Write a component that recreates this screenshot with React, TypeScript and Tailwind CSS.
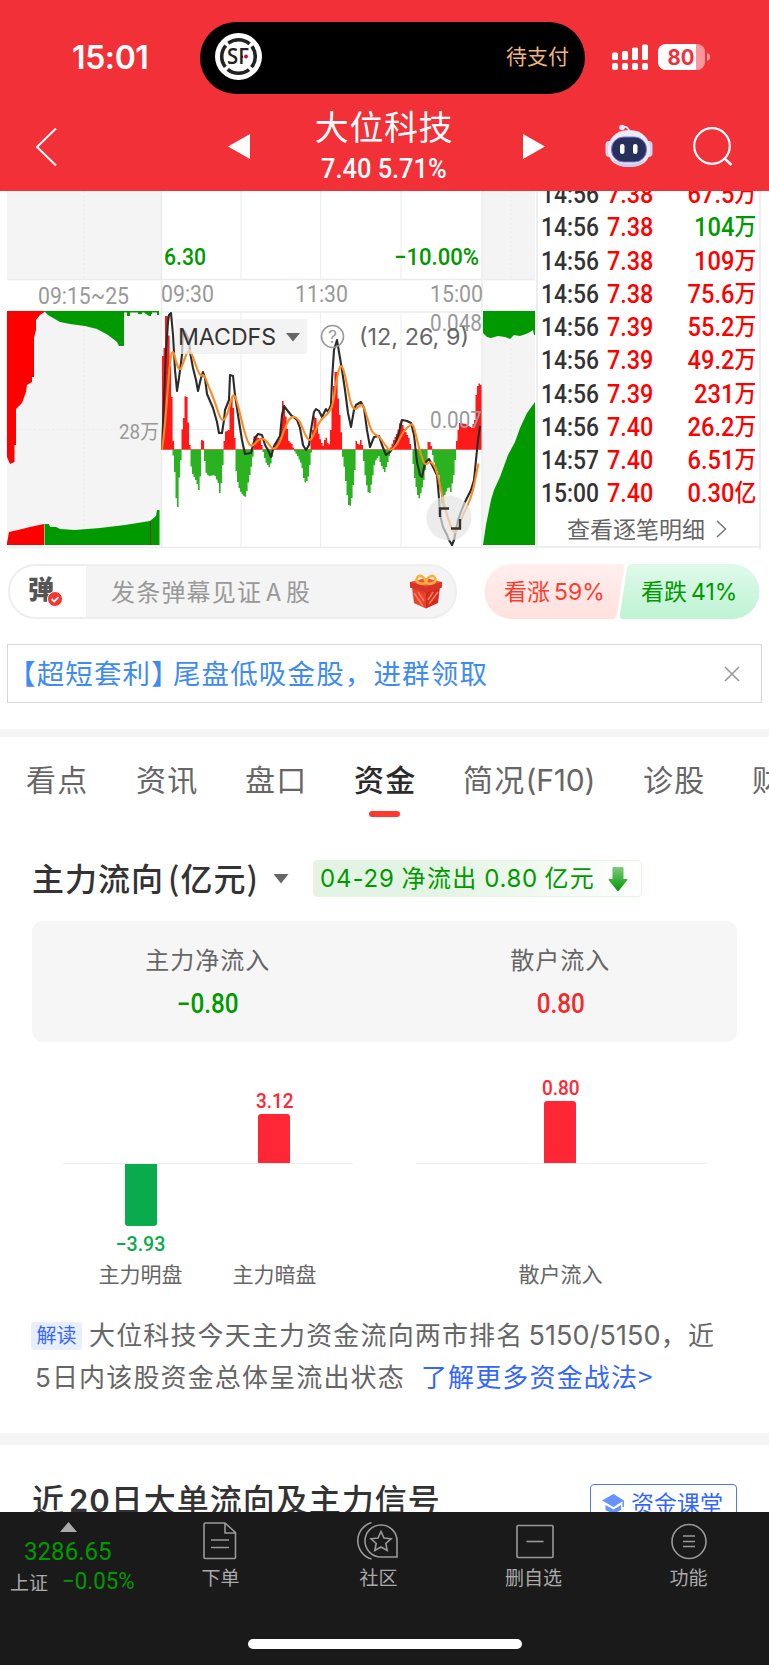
import type { ReactNode } from 'react';

type Point = [number, number];

interface Trade {
  time: string;
  price: string;
  amount: string;
  down?: boolean;
}

const trades: Trade[] = [
  { time: '14:56', price: '7.38', amount: '67.5万' },
  { time: '14:56', price: '7.38', amount: '104万', down: true },
  { time: '14:56', price: '7.38', amount: '109万' },
  { time: '14:56', price: '7.38', amount: '75.6万' },
  { time: '14:56', price: '7.39', amount: '55.2万' },
  { time: '14:56', price: '7.39', amount: '49.2万' },
  { time: '14:56', price: '7.39', amount: '231万' },
  { time: '14:56', price: '7.40', amount: '26.2万' },
  { time: '14:57', price: '7.40', amount: '6.51万' },
  { time: '15:00', price: '7.40', amount: '0.30亿' },
];

const ZERO = 449.5;

// MACD histogram outline, above the zero line
const redProfile: Point[] = [
  [162, 356], [164, 345], [165, 316], [167, 316], [169, 355], [171, 397], [172, 432], [173, 450],
  [180, 450], [181, 433], [183, 418], [184, 396], [186, 397], [187, 421], [188, 424], [189, 445], [190, 450],
  [200, 450], [201, 440], [203, 441], [204, 450],
  [223, 450], [224, 432], [228, 430], [229, 415], [230, 396], [232, 400], [233, 416], [234, 438], [235, 450],
  [252, 450], [253, 436], [258, 438], [260, 440], [262, 450],
  [272, 450], [274, 444], [280, 438], [281, 414], [282, 401], [284, 408], [286, 425], [288, 441], [292, 445], [293, 450],
  [309, 450], [312, 430], [314, 412], [315, 418], [317, 430], [320, 441], [323, 447], [324, 440], [326, 437],
  [328, 449], [330, 430], [332, 400], [334, 372], [336, 372], [337, 393], [339, 415], [341, 438], [342, 450],
  [354, 450], [355, 440], [358, 446], [360, 440], [363, 450],
  [389, 450], [393, 440], [397, 432], [400, 419], [403, 428], [408, 438], [411, 450],
  [426, 450], [427, 442], [430, 442], [431, 450],
  [455, 450], [457, 432], [459, 423], [465, 424], [471, 428], [474, 420], [475, 398], [477, 386], [478, 383], [481, 386],
];

// MACD histogram outline, below the zero line
const greenProfile: Point[] = [
  [172, 450], [174, 472], [176, 507], [177, 507], [178, 485], [179, 470], [181, 450],
  [189, 450], [191, 472], [193, 476], [196, 482], [198, 490], [200, 472], [201, 450],
  [203, 450], [205, 472], [208, 476], [214, 475], [218, 484], [219, 493], [221, 480], [223, 450],
  [234, 450], [236, 478], [239, 490], [242, 495], [245, 497], [247, 485], [250, 470], [253, 450],
  [262, 450], [265, 462], [269, 468], [273, 450],
  [293, 450], [297, 456], [301, 465], [303, 478], [305, 484], [308, 475], [310, 455], [311, 450],
  [341, 450], [344, 470], [346, 492], [348, 505], [350, 506], [352, 490], [354, 470], [355, 450],
  [362, 450], [364, 472], [367, 492], [369, 493], [371, 482], [374, 462], [378, 456], [380, 464], [384, 472], [387, 462], [390, 450],
  [411, 450], [414, 478], [416, 490], [418, 500], [421, 490], [423, 480], [426, 460], [427, 450],
  [431, 450], [434, 465], [438, 475], [440, 495], [442, 512], [444, 495], [448, 486], [450, 492], [453, 475], [455, 455], [456, 450],
];

const fastLine =
  '162,450 164,400 166,350 168,322 169,315 171,313 173,335 175,370 177,391 179,378 182,355 183,330 185,332 189,340 190,352 193,368 196,380 198,391 201,378 203,372 205,378 207,394 213,408 217,422 219,433 222,433 224,420 225,410 229,400 230,375 233,376 235,395 238,415 242,440 245,454 251,453 255,438 258,434 262,435 265,445 268,450 271,457 274,446 280,436 282,415 284,406 287,410 291,415 297,420 300,428 303,445 306,450 309,445 311,430 314,412 316,409 319,411 322,417 326,409 328,412 331,405 332,380 334,350 337,340 339,352 342,370 345,390 348,413 351,427 354,410 356,405 361,402 364,408 367,430 370,447 374,437 379,436 382,445 386,455 390,452 395,445 399,432 402,420 407,421 411,423 414,435 417,462 420,475 422,477 425,463 429,459 432,465 437,475 439,498 440,515 443,527 447,535 449,540 452,545 454,540 456,530 458,520 462,509 465,502 468,496 471,490 474,480 476,460 478,440 480,426';

const slowLine: Point[] = [
  [162, 450], [164, 435], [167, 400], [170, 360], [173, 349], [176, 362], [180, 372], [184, 360], [189, 348], [193, 357],
  [200, 377], [204, 374], [208, 385], [215, 402], [219, 415], [223, 422], [228, 413], [231, 400], [234, 393], [238, 405],
  [243, 427], [248, 443], [252, 447], [258, 440], [263, 438], [268, 443], [273, 450], [279, 445], [284, 430], [289, 419],
  [294, 416], [300, 421], [305, 435], [310, 442], [315, 432], [320, 420], [328, 414], [333, 405], [336, 383], [340, 364],
  [344, 370], [348, 390], [351, 405], [355, 410], [359, 406], [363, 404], [368, 420], [372, 433], [379, 436], [385, 445],
  [390, 451], [396, 446], [403, 432], [409, 426], [413, 423], [417, 440], [421, 455], [425, 466], [430, 461], [435, 466],
  [439, 480], [443, 500], [449, 522], [455, 536], [460, 521], [468, 505], [473, 491], [477, 470], [480, 457],
];

function toColumns(profile: Point[]): string {
  let d = '';
  for (let x = 162; x < 481; x += 1.5) {
    const i = profile.findIndex((p) => p[0] > x);
    if (i < 1) continue;
    const [x0, y0] = profile[i - 1];
    const [x1, y1] = profile[i];
    const y = y0 + ((y1 - y0) * (x - x0)) / (x1 - x0);
    if (Math.abs(y - ZERO) < 1) continue;
    d += `M${x} ${ZERO}V${y.toFixed(1)}h1.6V${ZERO}z`;
  }
  return d;
}

function smooth(points: Point[]): string {
  let d = `M${points[0][0]} ${points[0][1]}`;
  for (let i = 1; i < points.length - 1; i++) {
    const mx = (points[i][0] + points[i + 1][0]) / 2;
    const my = (points[i][1] + points[i + 1][1]) / 2;
    d += `Q${points[i][0]} ${points[i][1]} ${mx} ${my}`;
  }
  return d;
}

function StatusBar() {
  return (
    <div className="flex h-[108px] items-start pt-[22px]">
      <div className="w-[200px] pl-[72px] pt-[18px] font-[Inter] text-[32px] font-semibold leading-[36px] tracking-[-0.4px]">15:01</div>
      <div className="flex h-[72px] w-[385px] items-center justify-between rounded-full bg-black pl-[15px] pr-[16px]">
        <svg width="47" height="47" viewBox="0 0 47 47" className="-mt-1">
          <circle cx="23.5" cy="23.5" r="23.5" fill="#fff" />
          <circle cx="23.5" cy="23.5" r="16.8" fill="none" stroke="#222" strokeWidth="3.6" strokeDasharray="23 3.39" strokeDashoffset="-14.9" />
          <text x="12" y="31" fontFamily="Open Sans" fontWeight="600" fontSize="21" textLength="22" lengthAdjust="spacingAndGlyphs" fill="#222">SF</text>
          <circle cx="31" cy="23.5" r="3" fill="#fff" />
          <circle cx="31" cy="23.5" r="1.9" fill="#e60028" />
        </svg>
        <span className="-mt-1 text-[21px] text-[#efb47c]">待支付</span>
      </div>
      <svg width="100" height="28" viewBox="0 0 100 28" className="ml-[26px] mt-[21px]">
        <g fill="#fff">
          <rect x="1" y="9.500" width="6" height="7.500" rx="1.500" />
          <rect x="11" y="8" width="6" height="9" rx="1.500" />
          <rect x="21" y="4.500" width="6" height="12.500" rx="1.500" />
          <rect x="31" y="1.500" width="6" height="15.500" rx="1.500" />
          {[1, 11, 21, 31].map((x) => (
            <rect key={x} x={x} y="20" width="6" height="7" rx="2" />
          ))}
        </g>
        <clipPath id="battery"><rect x="47" y="1" width="47" height="26" rx="8" /></clipPath>
        <g clipPath="url(#battery)">
          <rect x="47" y="1" width="47" height="26" fill="#f9979b" />
          <rect x="47" y="1" width="38" height="26" fill="#fff" />
        </g>
        <path d="M96 10q3 1 3 4t-3 4z" fill="#f9979b" />
        <text x="56.500" y="21.500" fontFamily="Inter" fontWeight="700" fontSize="21" textLength="27" lengthAdjust="spacingAndGlyphs" fill="#f23038">80</text>
      </svg>
    </div>
  );
}

function Robot() {
  return (
    <svg width="48" height="44" viewBox="0 0 48 44">
      <path d="M17 3q7-1 7 5" fill="none" stroke="#dfe0f4" strokeWidth="2" />
      <circle cx="17" cy="3.500" r="2.800" fill="#e6e6f6" />
      <rect x="0.500" y="17" width="8" height="16" rx="4" fill="#d3d4f0" />
      <rect x="39.500" y="17" width="8" height="16" rx="4" fill="#d3d4f0" />
      <path d="M24 6C38 6 45 15 45 26S37 43 24 43 3 37 3 26 10 6 24 6z" fill="#ececf8" />
      <path d="M7 35q6 8 17 8t17-8q-7 5-17 5T7 35z" fill="#cacdec" />
      <rect x="6.500" y="13" width="35" height="25" rx="12" fill="#27305a" stroke="#7d74e8" />
      <rect x="15" y="20" width="4.500" height="10" rx="2.200" fill="#fff" />
      <rect x="28" y="20" width="4.500" height="10" rx="2.200" fill="#fff" />
    </svg>
  );
}

function NavBar() {
  return (
    <div className="flex h-[83px] items-start">
      <svg width="30" height="42" viewBox="0 0 30 42" className="ml-[32px] mt-[18px]">
        <path d="M24 2.500 5 21l19 18.500" fill="none" stroke="#fff" strokeWidth="2" />
      </svg>
      <svg width="22" height="26" viewBox="0 0 22 26" className="ml-[166px] mt-[25px]">
        <path d="M22 1v25L0 13.500z" fill="#fff" />
      </svg>
      <div className="flex w-[273px] flex-col items-center pr-[5px]">
        <div className="-mt-px text-[34px] leading-[38px] tracking-[0.600px]">大位科技</div>
        <div className="mt-[9px] scale-x-[0.94] whitespace-nowrap font-[Roboto] text-[27px] font-medium leading-[31px]">7.40 5.71%</div>
      </div>
      <svg width="22" height="26" viewBox="0 0 22 26" className="mt-[25px]">
        <path d="M0 1v25l22-12.500z" fill="#fff" />
      </svg>
      <div className="ml-[60px] mt-[16px]"><Robot /></div>
      <svg width="42" height="42" viewBox="0 0 42 42" className="ml-[39px] mt-[18px]">
        <circle cx="20" cy="20" r="17.800" fill="none" stroke="#fff" strokeWidth="2.200" />
        <path d="m32 32 7.500 7" stroke="#fff" strokeWidth="2.400" />
      </svg>
    </div>
  );
}

interface ChartTextProps {
  x: number;
  y: number;
  w: number;
  size?: number;
  color?: string;
  weight?: number;
  font?: string;
  children: string;
}

function ChartText({ x, y, w, size = 23, color = '#999', weight = 400, font = 'Roboto', children }: ChartTextProps) {
  return (
    <text x={x} y={y} textLength={w} lengthAdjust="spacingAndGlyphs" fontSize={size} fontWeight={weight} fill={color} fontFamily={`${font}, 'Noto Sans CJK SC', sans-serif`}>
      {children}
    </text>
  );
}

function MarketChart() {
  return (
    <svg width="536" height="358" viewBox="0 191 536 358" className="shrink-0">
      <g fill="#f4f4f4">
        <rect x="7" y="191" width="154" height="88" />
        <rect x="482" y="191" width="53" height="88" />
        <rect x="7" y="311" width="154" height="234" />
        <rect x="482" y="311" width="53" height="234" />
      </g>
      <g stroke="#ececec" strokeWidth="1.500" fill="none">
        <path d="M161.500 191V547M482 191V547" />
        <path d="M7 279.500H535M161 312H482M7 547.500H536" />
        <path d="M241 191V279M320.700 191V279M401 191V279M241 312V547M320.700 312V547M401 312V547M161 429.500H482" strokeWidth="1" />
        <path d="M84 191V279M511 191V279M84 312V545M511 312V545M7 429.500H161M482 429.500H535" strokeWidth="1.200" strokeDasharray="2 2.500" />
      </g>

      <ChartText x={164} y={265} w={42} color="#090" weight={500}>6.30</ChartText>
      <ChartText x={394} y={265} w={85} color="#090" weight={500}>−10.00%</ChartText>
      <ChartText x={38} y={304} w={91}>09:15~25</ChartText>
      <ChartText x={161} y={302} w={53}>09:30</ChartText>
      <ChartText x={295} y={302} w={53}>11:30</ChartText>
      <ChartText x={430} y={302} w={53}>15:00</ChartText>
      <ChartText x={119} y={439} w={40} size={20}>28万</ChartText>

      {/* call auction blocks */}
      <path fill="#f00" d="M7 311H46L40 315 36 320 36 330 34 338V377H32V382L27 385 26 392 22 403 16 409V445H14.500V462L10 464 7 457z" />
      <path fill="#090" d="M44 311H159V315H157V312.500H152V314H151V316H149L144 312.500H142V314H138V312.500H130V316H127V312.500H124V346H119L117 342 108 335 97 329 85 326 70 324 60 322 48 315z" />
      <path fill="#f00" d="M7 545V543L9 532 18 530 30 527 44 524V545z" />
      <path fill="#090" d="M44.500 524H49L50 527 56 527 60 529 75 530 100 528 125 525 150 521 156 516 157 510H159.500V545H44.500z" />
      <path d="M150.500 521V545" stroke="#730" />
      <path fill="#090" d="M483 311H535V335H534L533 330 530 332 526 334 520 336 514 335 510 339 505 337 498 336 491 338 487 337 483 333z" />
      <path fill="#090" d="M483 545 486 525 491 500 494 490 500 477 508 455 515 442 520 428 527 413 535 402V545z" />

      <path d={toColumns(redProfile)} fill="#ff1a1a" />
      <path d={toColumns(greenProfile)} fill="#2bb221" />
      <path d="M162 449.500H481" stroke="#ff1a1a" strokeWidth="1" opacity=".5" />
      <polyline points={fastLine} fill="none" stroke="#2b2b2b" strokeWidth="2.100" strokeLinejoin="round" />
      <path d={smooth(slowLine)} fill="none" stroke="#ff8a1f" strokeWidth="2.100" />

      <rect x="175" y="319" width="132" height="35" rx="2" fill="#eee" opacity=".72" />
      <ChartText x={178} y={345} w={98} color="#333" font="Inter">MACDFS</ChartText>
      <path d="M286 333h14l-7 8.500z" fill="#666" />
      <circle cx="332.500" cy="336.500" r="11" fill="none" stroke="#999" strokeWidth="1.600" />
      <ChartText x={328} y={343} w={9} size={17} font="Inter">?</ChartText>
      <ChartText x={430} y={331} w={52}>0.048</ChartText>
      <ChartText x={430} y={428} w={52}>0.007</ChartText>
      <ChartText x={359} y={345} w={110} color="#666" font="Inter">(12, 26, 9)</ChartText>

      <circle cx="449" cy="518" r="22.500" fill="#e4e4e4" opacity=".7" />
      <path d="M440 517V508.500H449M460 519V528.500H451" fill="none" stroke="#333" strokeWidth="2.400" />
    </svg>
  );
}

function TradeList() {
  return (
    <div className="flex h-[358px] w-[225px] flex-col overflow-hidden border-r-2 border-l-2 border-[#eee]">
      <div className="-mt-[13.500px]">
        {trades.map((t, i) => (
          <div key={i} className="flex h-[33.250px] items-center font-[Roboto,'Noto_Sans_CJK_SC',sans-serif] text-[26px] font-medium leading-none">
            <span className="w-[69px] origin-left translate-x-[3px] scale-x-[0.88] text-[#333]">{t.time}</span>
            <span className="w-[48px] origin-left scale-x-[0.9] text-[#f00]">{t.price}</span>
            <span className={`flex flex-1 origin-right scale-x-[0.91] items-center justify-end pr-[3px] ${t.down ? 'text-[#090]' : 'text-[#f00]'}`}>
              {t.amount.slice(0, -1)}
              <span className="text-[24px] leading-none">{t.amount.slice(-1)}</span>
            </span>
          </div>
        ))}
      </div>
      <div className="flex flex-1 items-start border-b-2 border-[#eee] pt-[6px] pl-[29px] text-[23px] leading-[24px] text-[#666]">
        查看逐笔明细
        <svg width="14" height="22" viewBox="0 0 14 22" className="ml-[10px] mt-[2px]">
          <path d="m2 3 8.500 8L2 19" fill="none" stroke="#777" strokeWidth="1.500" />
        </svg>
      </div>
      <div className="h-[1px]" />
    </div>
  );
}

function Gift() {
  return (
    <svg width="34" height="36" viewBox="0 0 34 36">
      <path d="M3 13 17 17V34.500L5 29z" fill="#e8412f" />
      <path d="M17 17 31 13 29 29 17 34.500z" fill="#d42a22" />
      <path d="M1 8 17 4 33 8V13L17 18 1 13z" fill="#f0503c" />
      <path d="M1 8 17 12.500 33 8V13.500L17 18.500 1 13.500z" fill="#d93227" />
      <path d="m5 19 9 13M9 18l6 9M29 18l-9 12M24 18l-5 8" stroke="#ff8259" strokeWidth="1.500" />
      <path d="M17 9C11 11 6 8 8 4s8-2 9 5c1-7 7-9 9-5s-3 7-9 5z" fill="none" stroke="#f6b03c" strokeWidth="2.600" />
    </svg>
  );
}

function CommentRow() {
  return (
    <div className="flex px-[8px] pt-[15px]">
      <div className="flex h-[55px] w-[449px] items-center overflow-hidden rounded-full border-2 border-[#eee] bg-[#f4f4f4]">
        <div className="relative flex h-full w-[76px] items-center bg-white pl-[18px]">
          <span className="-mt-[8px] text-[26px] font-black leading-none text-[#555]">弹</span>
          <svg width="16" height="16" viewBox="0 0 16 16" className="absolute left-[37px] top-[25px]">
            <circle cx="8" cy="8" r="7.500" fill="#f9362e" stroke="#fff" />
            <path d="m4.500 8 2.700 2.500 4.300-4.300" fill="none" stroke="#fff" strokeWidth="1.800" />
          </svg>
        </div>
        <span className="-mt-[2px] flex-1 pl-[25px] text-[24px] leading-none tracking-[1.200px] text-[#999]">发条弹幕见证<span className="px-[4px]">A</span>股</span>
        <div className="mr-[12px]"><Gift /></div>
      </div>
      <div className="relative ml-[27px] h-[55px] w-[276px]">
        <svg width="276" height="55" viewBox="0 0 276 55">
          <defs>
            <linearGradient id="up" x2="0" y2="1"><stop stopColor="#ffefee" /><stop offset="1" stopColor="#ffe1de" /></linearGradient>
            <linearGradient id="down" x2="0" y2="1"><stop stopColor="#e0faea" /><stop offset="1" stopColor="#bdf3d3" /></linearGradient>
          </defs>
          <path d="M28 0H137q4 0 3 4L133 50q-1 5-5 5H28A27.500 27.500 0 0 1 28 0z" fill="url(#up)" />
          <path d="M148 0H248A27.500 27.500 0 0 1 248 55H139q-4 0-3-5L143 4q1-4 5-4z" fill="url(#down)" />
        </svg>
        <div className="absolute inset-0 flex items-center text-[23px] leading-none">
          <span className="w-[137px] pl-[20px] text-[#ff3b30]">看涨<span className="pl-[4px] font-[Inter]">59%</span></span>
          <span className="pl-[20px] text-[#090]">看跌<span className="pl-[4px] font-[Inter]">41%</span></span>
        </div>
      </div>
    </div>
  );
}

function Tabs() {
  return (
    <div className="flex h-[94px] overflow-hidden whitespace-nowrap pl-[26px] pt-[19px] text-[30px] leading-[44px] tracking-[1.200px] text-[#666]">
      <span className="w-[110px] shrink-0">看点</span>
      <span className="w-[109px] shrink-0">资讯</span>
      <span className="w-[109px] shrink-0">盘口</span>
      <div className="w-[109px] shrink-0 font-medium text-[#2b2b2b]">
        资金
        <div className="ml-[15px] mt-[11px] h-[6px] w-[31px] rounded-full bg-[#ff3830]" />
      </div>
      <span className="w-[180px] shrink-0">简况<span className="font-[Inter] text-[30px] tracking-[-0.200px]">(F10)</span></span>
      <span className="w-[109px] shrink-0">诊股</span>
      <span className="shrink-0">财务</span>
    </div>
  );
}

interface FlowBarProps {
  label: string;
  value: string;
  className: string;
}

function FlowUp({ label, value, className }: FlowBarProps) {
  return (
    <div className="flex w-[134px] flex-col items-center">
      <div className="flex h-[86px] flex-col items-center justify-end">
        <span className="mb-[4px] scale-x-95 font-[Roboto] text-[20px] font-medium leading-[18px] text-[#ff2636]">{value}</span>
        <div className={`w-[32px] rounded-t-[3px] bg-[#ff2636] ${className}`} />
      </div>
      <div className="mt-[96px] text-[21px] leading-[28px] text-[#666]">{label}</div>
    </div>
  );
}

function FlowDown({ label, value, className }: FlowBarProps) {
  return (
    <div className="flex w-[134px] flex-col items-center pt-[87px]">
      <div className={`w-[32px] rounded-b-[3px] bg-[#0aab4c] ${className}`} />
      <span className="mt-[9px] scale-x-[0.98] font-[Roboto] text-[20px] font-medium leading-[18px] text-[#0aab4c]">{value}</span>
      <div className="mt-[6px] text-[21px] leading-[28px] text-[#666]">{label}</div>
    </div>
  );
}

function MoneyFlow() {
  return (
    <section className="h-[602px] px-[32px] pt-[29px]">
      <div className="flex items-center">
        <h2 className="-mt-[4px] w-[226px] whitespace-nowrap text-[32px] font-medium leading-[36px] tracking-[1px] text-[#333]">主力流向<span className="ml-[4px]">(亿元)</span></h2>
        <svg width="16" height="10" viewBox="0 0 16 10" className="ml-[15px]"><path d="M.5 0h15L8 9.500z" fill="#666" /></svg>
        <div className="ml-[24px] flex h-[37px] w-[329px] items-center rounded-[4px] border border-[#e4f5e4] bg-linear-to-r from-[#e4f4e4] from-40% to-white pl-[6px] text-[24px] leading-none tracking-[1.300px] text-[#090]">
          <span className="-mt-[2px] w-[277px] whitespace-nowrap"><span className="font-[Inter] tracking-[0.900px]">04-29</span> 净流出 <span className="font-[Inter] tracking-[0.700px]">0.80</span> 亿元</span>
          <svg width="20" height="26" viewBox="0 0 20 26" className="ml-[11px]">
            <defs><linearGradient id="arrow" x2="0" y2="1"><stop stopColor="#7ecb7e" /><stop offset="1" stopColor="#090" /></linearGradient></defs>
            <path d="M5.500 1h9q1 0 1 1V13H19q1 .5 0 1.500L10.500 25h-1L1 14.500Q0 13.500 1 13H4.500V2q0-1 1-1z" fill="url(#arrow)" />
          </svg>
        </div>
      </div>

      <div className="mt-[24px] grid h-[121px] grid-cols-2 rounded-[11px] bg-[#f6f6f6] pt-[24px] text-center">
        <div className="-ml-px">
          <div className="text-[24px] leading-[28px] tracking-[1px] text-[#666]">主力净流入</div>
          <div className="mt-[16px] scale-x-[0.9] font-[Roboto] text-[27px] font-medium leading-[30px] text-[#090]">−0.80</div>
        </div>
        <div className="-ml-px">
          <div className="text-[24px] leading-[28px] tracking-[1px] text-[#666]">散户流入</div>
          <div className="mt-[16px] scale-x-[0.9] font-[Roboto] text-[27px] font-medium leading-[30px] text-[#f02b2b]">0.80</div>
        </div>
      </div>

      <div className="mt-[35px] flex h-[220px] gap-[63px] px-[31px]">
        <div className="flex w-[290px] bg-[linear-gradient(#eee,#eee)] bg-[length:100%_1px] bg-[position:0_86px] bg-no-repeat pl-[10.500px]">
          <FlowDown label="主力明盘" value="−3.93" className="h-[62px]" />
          <FlowUp label="主力暗盘" value="3.12" className="h-[49px]" />
        </div>
        <div className="flex w-[290px] justify-center bg-[linear-gradient(#eee,#eee)] bg-[length:100%_1px] bg-[position:0_86px] bg-no-repeat pr-px">
          <FlowUp label="散户流入" value="0.80" className="h-[62px]" />
        </div>
      </div>

      <div className="mt-[18px] whitespace-nowrap text-[26px] tracking-[1.150px] text-[#666]">
        <div className="flex h-[42px] items-center leading-none">
          <span className="mr-[7px] -ml-px flex h-[28px] w-[51px] items-center justify-center rounded-[4px] bg-[#e8eefe] pb-[2px] text-[20px] leading-none tracking-normal text-[#36f]">解读</span>
          <span className="-mt-[2px]">大位科技今天主力资金流向两市排名<span className="pl-[5px] font-[Inter] text-[27px] tracking-[0.100px]">5150/5150</span>，近</span>
        </div>
        <div className="flex h-[41px] items-center leading-none">
          <span className="-mt-[2px]">
            <span className="pl-[3px] font-[Inter]">5</span>日内该股资金总体呈流出状态
            <span className="pl-[16px] text-[#36f]">了解更多资金战法&gt;</span>
          </span>
        </div>
      </div>
    </section>
  );
}

function SignalHeading() {
  return (
    <section className="flex h-[67px] items-start overflow-hidden px-[32px] pt-[34px]">
      <h2 className="flex-1 whitespace-nowrap text-[32px] font-medium leading-[38px] tracking-[1px] text-[#333]">
        近<span className="pl-[4px] font-[Inter] text-[31px] font-semibold">20</span>日大单流向及主力信号
      </h2>
      <div className="mt-[5px] flex h-[40px] w-[147px] items-center rounded-[4px] border border-[#4a78ff] pb-[4px] pl-[11px] text-[23px] leading-none text-[#36f]">
        <svg width="23" height="20" viewBox="0 0 23 20" className="mr-[6px] mt-[3px]">
          <path d="M11.500 0 22 6.500 11.500 13 0 6.500zM3.500 11l8 4.500 7.500-4.500v5l-7.500 4-8-4zM20.500 7h1.500v6h-1.500z" fill="#6793ff" />
        </svg>
        资金课堂
      </div>
    </section>
  );
}

function BarItem({ label, className, children }: { label: string; className: string; children: ReactNode }) {
  return (
    <div className={`flex flex-col items-center ${className}`}>
      <svg width="42" height="40" viewBox="0 0 42 40" fill="none" stroke="#999" strokeWidth="1.600" className="-ml-[2px]">{children}</svg>
      <span className="mt-[5px] text-[19px] leading-[21px] text-[#aaa]">{label}</span>
    </div>
  );
}

function BottomBar() {
  return (
    <footer className="h-[153px] bg-[#1a1a1a]">
      <div className="flex h-[127px] pt-[9px]">
        <div className="w-[150px]">
          <svg width="18" height="10" viewBox="0 0 18 10" className="ml-[60px] mt-px"><path d="M8.500 0 17 10H0z" fill="#aaa" /></svg>
          <div className="ml-[24px] mt-[4px] origin-left scale-x-[0.91] font-[Roboto] text-[26.500px] leading-[30px] text-[#090]">3286.65</div>
          <div className="mt-[2px] flex items-center pl-[10px] leading-[28px]">
            <span className="w-[52px] text-[19px] text-[#aaa]">上证</span>
            <span className="origin-left scale-x-[0.97] font-[Roboto] text-[23px] text-[#090]">−0.05%</span>
          </div>
        </div>
        <BarItem label="下单" className="ml-[30px] w-[81px]">
          <path d="M5 3.500Q5 2 6.500 2H26l10.500 9.500V36.500q0 1-1 1H6q-1 0-1-1zM26 2V12H36.500M12 19h18M12 26.500h18" />
        </BarItem>
        <BarItem label="社区" className="ml-[77px] w-[81px]">
          <path d="M14.500 1.500a19 19 0 0 0 0 36.500M24 4a16 16 0 0 0 0 32H40V20A16 16 0 0 0 24 4z" />
          <path d="m24 10.500 3 6.500 7 .8-5.200 4.700 1.400 7-6.200-3.500-6.200 3.500 1.400-7L14 17.800l7-.8z" />
        </BarItem>
        <BarItem label="删自选" className="ml-[74px] w-[81px]">
          <rect x="5" y="4.500" width="36" height="32" rx="1" />
          <path d="M14.500 20.500h17" />
        </BarItem>
        <BarItem label="功能" className="ml-[74px] w-[81px]">
          <circle cx="22" cy="20.500" r="17" />
          <path d="M16 15h12M16 20.500h12M16 25.500h12" />
        </BarItem>
      </div>
      <div className="mx-auto h-[10px] w-[274px] rounded-full bg-white" />
    </footer>
  );
}

export default function App() {
  return (
    <div className="h-[1665px] w-[769px] overflow-hidden bg-white font-['Noto_Sans_CJK_SC',sans-serif]">
      <header className="bg-[#f23038] text-white">
        <StatusBar />
        <NavBar />
      </header>
      <div className="flex">
        <MarketChart />
        <TradeList />
      </div>
      <CommentRow />
      <div className="mx-[7px] mt-[25px] flex h-[59px] items-center border border-[#d8d8d8] pr-[21px] text-[27.500px] leading-none text-[#3f8cf0]">
        <span className="-mt-[2px] flex-1 whitespace-nowrap tracking-[1.150px]">【超短套利<span className="-mr-[7px]">】</span>尾盘低吸金股，进群领取</span>
        <svg width="16" height="16" viewBox="0 0 16 16"><path d="m1 1 14 14M15 1 1 15" stroke="#999" strokeWidth="1.600" /></svg>
      </div>
      <div className="mt-[26px] h-[8px] bg-[#f4f4f4]" />
      <Tabs />
      <MoneyFlow />
      <div className="h-[12px] bg-[#f4f4f4]" />
      <SignalHeading />
      <BottomBar />
    </div>
  );
}
